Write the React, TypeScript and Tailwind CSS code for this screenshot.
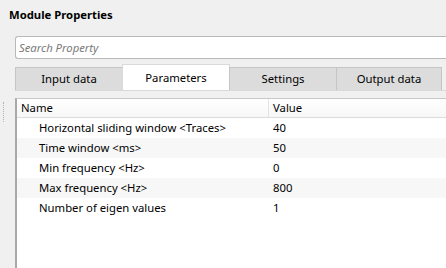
import React from "react";

const rows = [
  ["Horizontal sliding window <Traces>", "40"],
  ["Time window <ms>", "50"],
  ["Min frequency <Hz>", "0"],
  ["Max frequency <Hz>", "800"],
  ["Number of eigen values", "1"],
];

export default function App() {
  return (
    <div
      className="w-[446px] h-[268px] bg-[#f0f0f0] overflow-hidden flex flex-col text-[11.3px] text-black"
      style={{ fontFamily: '"Noto Sans", "Open Sans", sans-serif' }}
    >
      <div className="h-[29px] pl-[9px] pt-[6px] font-bold leading-[18px]">Module Properties</div>
      <div className="flex flex-1 min-h-0">
        <div className="w-[15px] shrink-0 flex flex-col">
          <div className="mt-[73px] ml-[3px] h-[20px] border-l border-dotted border-[#b0b0b0]" />
        </div>
        <div className="flex-1 flex flex-col min-w-0 w-[440px]">
          <div className="mt-[7px] h-[23px] bg-white border border-[#b9b9b9] rounded-l-[3px] border-r-0 flex items-center pl-[3px] italic text-[#7a7a7a] leading-none">
            Search Property
          </div>
          <div className="mt-[6px] h-[26px] flex items-end border-b border-[#d9d9d9]">
            <div className="w-[108px] h-[23px] bg-[#dcdcdc] border border-[#c5c5c5] border-b-0 flex items-center justify-center">Input data</div>
            <div className="w-[108px] h-[26px] bg-white border border-[#d9d9d9] border-b-0 -ml-px flex items-center justify-center pt-[1px]">Parameters</div>
            <div className="w-[108px] h-[23px] bg-[#dcdcdc] border border-[#c5c5c5] border-b-0 -ml-px flex items-center justify-center">Settings</div>
            <div className="w-[106px] h-[23px] bg-[#dcdcdc] border border-[#c5c5c5] border-b-0 -ml-px flex items-center justify-center">Output data</div>
          </div>
          <div className="mt-[7px] flex-1 bg-white border-t border-l-2 border-[#c8c8c8] border-l-[#a8a8a8] flex flex-col">
            <div className="h-[19px] flex border-b border-[#dcdcdc] bg-gradient-to-b from-white to-[#f7f7f7]">
              <div className="w-[252px] pl-[4px] border-r border-[#e3e3e3] flex items-center">Name</div>
              <div className="flex-1 pl-[4px] flex items-center">Value</div>
            </div>
            {rows.map(([n, v], i) => (
              <div key={n} className={`h-[20px] flex items-center ${i % 2 === 1 ? "bg-[#f7f7f7]" : "bg-white"}`}>
                <div className="w-[253px] pl-[22px] whitespace-nowrap">{n}</div>
                <div className="flex-1 pl-[3px]">{v}</div>
              </div>
            ))}
          </div>
        </div>
      </div>
    </div>
  );
}
